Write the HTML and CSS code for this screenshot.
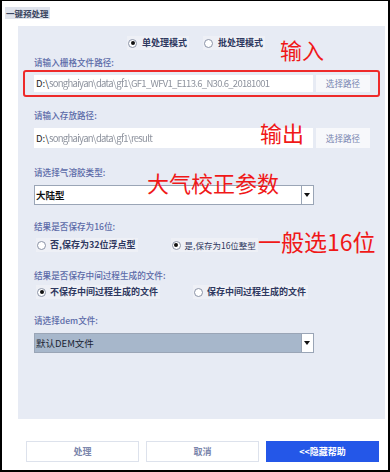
FILE: index.html
```html
<!DOCTYPE html>
<html>
<head>
<meta charset="utf-8">
<link rel="stylesheet" href="styles.css">
</head>
<body>
<div class="frame">
  <div class="title"><span>一键预处理</span></div>
  <div class="panel">
    <div class="radio-row mode-row">
      <label class="radio on"><i></i>单处理模式</label>
      <label class="radio"><i></i>批处理模式</label>
    </div>
    <div class="label l1">请输入栅格文件路径:</div>
    <div class="redbox">
      <div class="input"><span class="d">D:\</span><span class="blur">songhaiyan\data\gf1\GF1_WFV1_E113.6_N30.6_20181001</span></div>
      <div class="pick">选择路径</div>
    </div>
    <div class="label l2">请输入存放路径:</div>
    <div class="path-row">
      <div class="input"><span class="d">D:\</span><span class="blur">songhaiyan\data\gf1\result</span></div>
      <div class="pick">选择路径</div>
    </div>
    <div class="label l3">请选择气溶胶类型:</div>
    <div class="select"><span>大陆型</span><b></b></div>
    <div class="label l4">结果是否保存为16位:</div>
    <div class="radio-row r2">
      <label class="radio"><i></i>否,保存为32位浮点型</label>
      <label class="radio on second"><i></i>是,保存为16位整型</label>
    </div>
    <div class="label l5">结果是否保存中间过程生成的文件:</div>
    <div class="radio-row r3">
      <label class="radio on"><i></i>不保存中间过程生成的文件</label>
      <label class="radio third"><i></i>保存中间过程生成的文件</label>
    </div>
    <div class="label l6">请选择dem文件:</div>
    <div class="select dem"><span>默认DEM文件</span><b></b></div>

    <div class="note n1">输入</div>
    <div class="note n2">输出</div>
    <div class="note n3">大气校正参数</div>
    <div class="note n4">一般选16位</div>
  </div>
  <div class="buttons">
    <div class="btn">处理</div>
    <div class="btn">取消</div>
    <div class="btn primary">&lt;&lt;隐藏帮助</div>
  </div>
</div>
</body>
</html>
```

FILE: styles.css
```css
html, body { margin: 0; padding: 0; background: #fff; }
body { font-family: "Noto Sans CJK SC", "Liberation Sans", sans-serif; }
.frame {
  width: 390px; height: 472px; box-sizing: border-box;
  border: 2px solid #000; border-top-width: 1px;
  display: flex; flex-direction: column;
}
.title { height: 24px; padding-left: 3px; display: flex; align-items: center; }
.title span {
  font-size: 8.5px; font-weight: bold; color: #3a4660; background: #dfe3ec; line-height: 12px; padding: 0 1px;
}
.panel {
  position: relative;
  margin-top: 1px;
  margin-left: 16px; width: 367px; height: 393px;
  background: #e7ebf4; box-sizing: border-box;
  padding-left: 16px;
  display: flex; flex-direction: column;
}
.label { font-size: 8.6px; color: #5b6aa8; line-height: 12px; font-weight: 500; }
.radio-row { display: flex; align-items: center; height: 14px; }
.radio {
  display: flex; align-items: center; gap: 4px;
  font-size: 9px; font-weight: bold; color: #2e3860; background: #eef0f6; line-height: 14px; padding: 0 2px 0 1px;
}
.radio i {
  width: 7px; height: 7px; border: 1px solid #8a93a6; border-radius: 50%; background: #fff;
  box-sizing: content-box; position: relative; flex: none;
}
.radio.on i::after {
  content: ""; position: absolute; left: 1.5px; top: 1.5px; width: 4px; height: 4px; border-radius: 50%; background: #111;
}
.mode-row { margin-top: 10px; padding-left: 93px; gap: 14px; }
.mode-row .radio { gap: 5px; }
.l1 { margin-top: 6px; }
.redbox {
  margin-left: -11px; margin-top: 2px; width: 357px; height: 27px; box-sizing: border-box;
  border: 2px solid #ee2a2a; border-radius: 3px;
  display: flex; align-items: center; padding-left: 9px;
}
.input {
  width: 279px; height: 17px; background: #fff; box-sizing: border-box; padding-left: 2px;
  font-size: 9.5px; line-height: 17px; white-space: nowrap; overflow: hidden; color: #222;
}
.input .blur { color: #8e939e; letter-spacing: -0.7px; filter: blur(0.7px); }
.pick {
  margin-left: 3px; width: 54px; height: 17px; background: #f7f8fb;
  font-size: 8.6px; color: #7885b0; text-align: center; line-height: 17px;
}
.l2 { margin-top: 12px; }
.path-row { margin-top: 7px; display: flex; align-items: center; }
.path-row .input { height: 20px; line-height: 20px; }
.path-row .pick { height: 20px; line-height: 20px; }
.l3 { margin-top: 18px; }
.select {
  margin-top: 7px; width: 280px; height: 20px; box-sizing: border-box;
  border: 1px solid #9aa5b6; background: #fff; display: flex; align-items: stretch;
}
.select span { flex: 1; font-size: 9.5px; font-weight: bold; color: #111; line-height: 18px; padding-left: 1px; }
.select b {
  width: 11px; border-left: 1px solid #9aa5b6; background: #fff; position: relative;
}
.select b::after {
  content: ""; position: absolute; left: 2px; top: 7px;
  border-left: 3.5px solid transparent; border-right: 3.5px solid transparent; border-top: 4px solid #111;
}
.l4 { margin-top: 15px; }
.r2 { margin-top: 6px; padding-left: 2px; }
.r2 .second { margin-left: 33px; font-weight: normal; font-size: 8.5px; }
.l5 { margin-top: 17px; }
.r3 { margin-top: 4px; padding-left: 2px; }
.r3 .third { margin-left: 33px; }
.l6 { margin-top: 15px; }
.dem { margin-top: 7px; background: #a7b7cb; }
.dem span { color: #1a1f33; font-weight: normal; }
.note { position: absolute; color: #f01818; font-family: "Noto Sans CJK SC", sans-serif; line-height: 1; white-space: nowrap; }
.n1 { left: 262px; top: 12px; font-size: 22px; }
.n2 { left: 242px; top: 95px; font-size: 22px; }
.n3 { left: 129px; top: 145px; font-size: 22px; }
.n4 { left: 240px; top: 204px; font-size: 23px; }
.buttons { display: flex; gap: 7px; margin-top: 22px; padding-left: 24px; }
.btn {
  width: 113px; height: 21px; box-sizing: border-box; border: 1px solid #dde2ec; background: #fff;
  font-size: 9px; color: #7b86ac; text-align: center; line-height: 19px; font-weight: bold;
}
.btn.primary { background: #2457e8; border-color: #2457e8; color: #fff; }
```
